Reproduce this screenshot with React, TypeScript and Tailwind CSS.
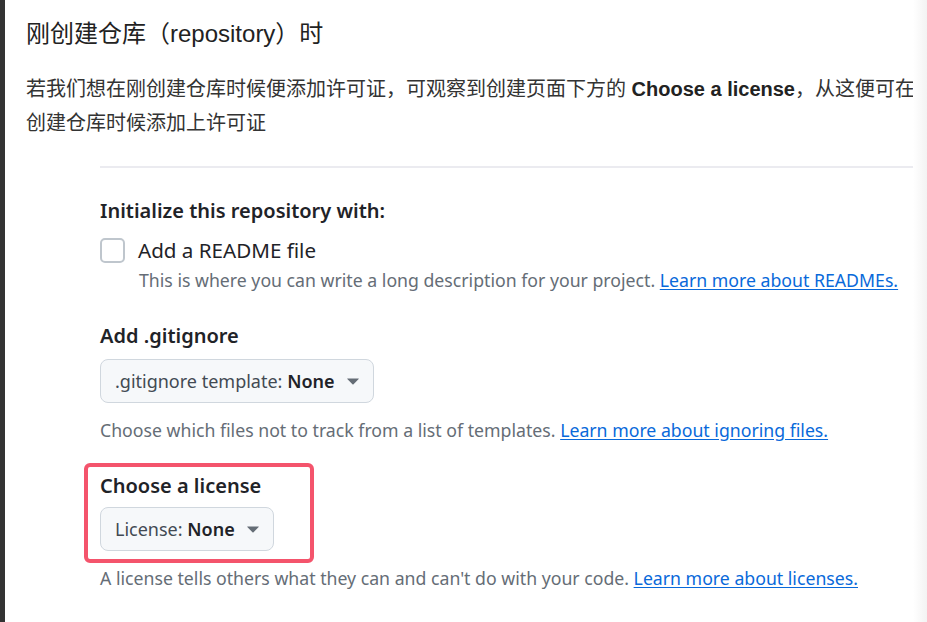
import React from 'react';

const gh = { fontFamily: '"Noto Sans", "Open Sans", sans-serif' };
const cn = { fontFamily: '"Liberation Sans", "Noto Sans CJK SC", sans-serif' };

const Caret: React.FC = () => (
  <svg width="12" height="7" viewBox="0 0 12 7" className="shrink-0">
    <path d="M0.6 0.4h10.8a0.4 0.4 0 0 1 0.3 0.7L6.3 6.4a0.45 0.45 0 0 1-0.6 0L0.3 1.1A0.4 0.4 0 0 1 0.6 0.4Z" fill="#656d76" />
  </svg>
);

const SelectButton: React.FC<{ label: string; value: string }> = ({ label, value }) => (
  <button className="h-[44px] flex items-center gap-3 px-[14px] rounded-lg border border-[#d0d7de] bg-[#f6f8fa] text-[18px] text-[#424a53]">
    <span>
      {label} <span className="font-semibold text-[#1f2328]">{value}</span>
    </span>
    <Caret />
  </button>
);

const Note: React.FC<{ text: string; link: string; className?: string }> = ({ text, link, className }) => (
  <p className={`text-[17.7px] leading-[26px] text-[#656d76] ${className ?? ''}`}>
    {text} <a className="text-[#0969da] underline underline-offset-2">{link}</a>
  </p>
);

export default function App() {
  return (
    <div className="w-[927px] h-[622px] flex bg-white overflow-hidden">
      <div className="w-[5px] bg-[#333333] shrink-0" />
      <div className="flex-1 pl-[21px]">
        <h2 style={cn} className="mt-[18px] text-[24px] leading-[32px] text-[#222]">
          刚创建仓库（repository）时
        </h2>
        <p style={cn} className="mt-[22px] -mr-[14px] text-[20px] leading-[34px] text-[#333]">
          若我们想在刚创建仓库时候便添加许可证，可观察到创建页面下方的 <b className="text-[#222]">Choose a license</b>，从这便可在创建仓库时候添加上许可证
        </p>

        <div style={gh} className="ml-[74px] text-[#1f2328]">
          <div className="mt-[26px] h-[2px] bg-[#ebebf0]" />

          <h3 className="mt-[29px] text-[20px] leading-[28px] font-semibold">Initialize this repository with:</h3>
          <label className="mt-[11px] flex items-center gap-[13px]">
            <span className="w-[25px] h-[25px] rounded-[5px] border-2 border-[#bfc6cd] bg-white shrink-0" />
            <span className="text-[20.6px] leading-[28px]">Add a README file</span>
          </label>
          <Note
            className="mt-[3px] ml-[39px]"
            text="This is where you can write a long description for your project."
            link="Learn more about READMEs."
          />

          <h3 className="mt-[29px] text-[20px] leading-[28px] font-semibold">Add .gitignore</h3>
          <div className="mt-[9px]">
            <SelectButton label=".gitignore template:" value="None" />
          </div>
          <Note
            className="mt-[14px]"
            text="Choose which files not to track from a list of templates."
            link="Learn more about ignoring files."
          />

          <div className="mt-[20px] -ml-4 w-fit border-4 border-[#f4546c] rounded-md pl-3 pr-[36px] pt-[5px] pb-[8px]">
            <h3 className="text-[20px] leading-[28px] font-semibold">Choose a license</h3>
            <div className="mt-[7px]">
              <SelectButton label="License:" value="None" />
            </div>
          </div>
          <Note
            className="mt-[2px]"
            text="A license tells others what they can and can't do with your code."
            link="Learn more about licenses."
          />
        </div>
      </div>
      <div className="w-[14px] shrink-0 bg-gradient-to-r from-white to-[#f3f3f3]" />
    </div>
  );
}
